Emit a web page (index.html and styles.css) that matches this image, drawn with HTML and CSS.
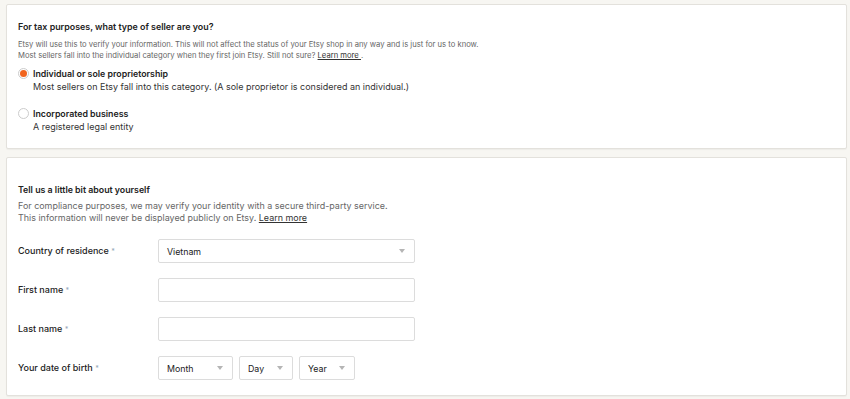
FILE: index.html
```html
<!DOCTYPE html>
<html>
<head>
<meta charset="utf-8">
<link rel="stylesheet" href="styles.css">
</head>
<body>
<section class="card card-tax">
  <h2 class="card-title">For tax purposes, what type of seller are you?</h2>
  <p class="tax-desc">Etsy will use this to verify your information. This will not affect the status of your Etsy shop in any way and is just for us to know.<br>Most sellers fall into the individual category when they first join Etsy. Still not sure? <a class="link" href="#">Learn more </a>.</p>
  <div class="radio-list">
    <label class="radio-item">
      <span class="radio radio-checked"></span>
      <span class="radio-text">
        <span class="radio-label">Individual or sole proprietorship</span>
        <span class="radio-desc">Most sellers on Etsy fall into this category. (A sole proprietor is considered an individual.)</span>
      </span>
    </label>
    <label class="radio-item">
      <span class="radio"></span>
      <span class="radio-text">
        <span class="radio-label">Incorporated business</span>
        <span class="radio-desc">A registered legal entity</span>
      </span>
    </label>
  </div>
</section>
<section class="card card-about">
  <h2 class="about-title">Tell us a little bit about yourself</h2>
  <p class="about-desc">For compliance purposes, we may verify your identity with a secure third-party service.<br>This information will never be displayed publicly on Etsy. <a class="link" href="#">Learn more</a></p>
  <div class="form">
    <div class="row">
      <span class="label">Country of residence <span class="req">*</span></span>
      <div class="select select-wide"><span>Vietnam</span><span class="caret"></span></div>
    </div>
    <div class="row">
      <span class="label">First name <span class="req">*</span></span>
      <div class="input"></div>
    </div>
    <div class="row">
      <span class="label">Last name <span class="req">*</span></span>
      <div class="input"></div>
    </div>
    <div class="row">
      <span class="label">Your date of birth <span class="req">*</span></span>
      <div class="dob">
        <div class="select select-month"><span>Month</span><span class="caret"></span></div>
        <div class="select select-day"><span>Day</span><span class="caret"></span></div>
        <div class="select select-year"><span>Year</span><span class="caret"></span></div>
      </div>
    </div>
  </div>
</section>
</body>
</html>
```
FILE: styles.css
```css
html, body {
  margin: 0;
  background: #f7f6f2;
}
body {
  padding: 4px 3px 0 6px;
  font-family: "Inter", "Noto Sans", sans-serif;
  color: #222;
  height: 399px;
  box-sizing: border-box;
  overflow: hidden;
}
.card {
  background: #fff;
  border: 1px solid #e3e1dc;
  border-radius: 2px;
  box-shadow: 0 1px 1px rgba(0,0,0,0.04);
  box-sizing: border-box;
}
.card-tax {
  height: 145px;
  padding: 15px 11px 0 11px;
}
.card-title {
  margin: 0;
  font-size: 8.9px;
  line-height: 14px;
  font-weight: 600;
  color: #222;
}
.tax-desc {
  margin: 5px 0 0 0;
  font-size: 7.65px;
  line-height: 11px;
  color: #666;
}
.link {
  color: #333;
  text-decoration: underline;
}
.radio-list {
  display: flex;
  flex-direction: column;
  gap: 14px;
  margin-top: 6px;
}
.radio-item {
  display: flex;
  align-items: flex-start;
  gap: 4px;
}
.radio {
  width: 11px;
  height: 11px;
  border: 1px solid #ccc;
  border-radius: 50%;
  box-sizing: border-box;
  background: #fff;
  margin-top: 1px;
  flex: none;
  position: relative;
}
.radio-checked::after {
  content: "";
  position: absolute;
  left: 1px;
  top: 1px;
  width: 7px;
  height: 7px;
  border-radius: 50%;
  background: #f1641e;
}
.radio-text {
  display: flex;
  flex-direction: column;
}
.radio-label {
  font-size: 8.8px;
  line-height: 13px;
  font-weight: 600;
  color: #222;
}
.radio-desc {
  font-size: 8.97px;
  line-height: 13px;
  color: #333;
}
.card-about {
  margin-top: 8px;
  height: 239px;
  padding: 25px 11px 0 11px;
}
.about-title {
  margin: 0;
  font-size: 8.8px;
  line-height: 14px;
  font-weight: 600;
  color: #222;
}
.about-desc {
  margin: 3px 0 0 0;
  font-size: 8.95px;
  line-height: 12px;
  color: #666;
}
.form {
  margin-top: 15px;
  display: flex;
  flex-direction: column;
  gap: 15px;
}
.row {
  display: flex;
  align-items: center;
  height: 24px;
}
.label {
  width: 140px;
  flex: none;
  font-size: 9px;
  line-height: 12px;
  font-weight: 500;
  color: #222;
}
.req {
  color: #9ab;
  font-size: 7px;
}
.input, .select {
  height: 24px;
  box-sizing: border-box;
  border: 1px solid #dcdcdc;
  border-radius: 2px;
  background: #fff;
}
.input {
  width: 257px;
}
.select {
  display: flex;
  align-items: center;
  justify-content: space-between;
  padding: 0 9px 0 8px;
  font-size: 8.8px;
  color: #222;
}
.select-wide { width: 257px; }
.dob {
  display: flex;
  gap: 6px;
}
.select-month { width: 75px; }
.select-day { width: 54px; }
.select-year { width: 56px; }
.caret {
  width: 0;
  height: 0;
  border-left: 3px solid transparent;
  border-right: 3px solid transparent;
  border-top: 4px solid #b5b5b5;
}
```
